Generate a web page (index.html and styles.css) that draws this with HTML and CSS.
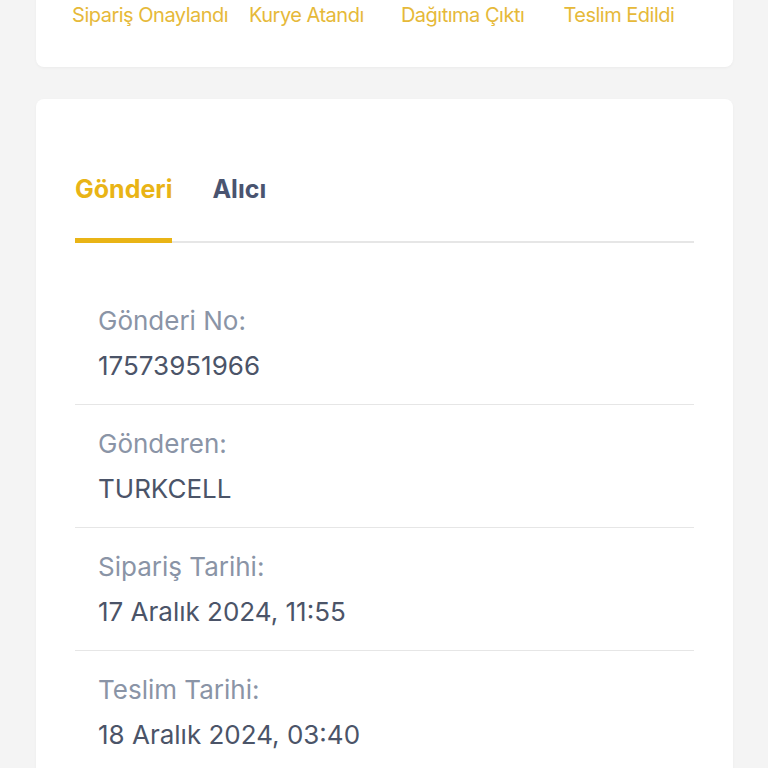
FILE: index.html
```html
<!DOCTYPE html>
<html lang="tr">
<head>
<meta charset="utf-8">
<title>Gönderi Takip</title>
<link rel="stylesheet" href="styles.css">
</head>
<body>
<div class="page">
  <section class="card steps-card">
    <div class="steps">
      <div class="step">Sipariş Onaylandı</div>
      <div class="step">Kurye Atandı</div>
      <div class="step">Dağıtıma Çıktı</div>
      <div class="step">Teslim Edildi</div>
    </div>
  </section>

  <section class="card detail-card">
    <div class="tabs">
      <div class="tab active">Gönderi</div>
      <div class="tab">Alıcı</div>
    </div>
    <ul class="info-list">
      <li class="info-row">
        <div class="info-label">Gönderi No:</div>
        <div class="info-value">17573951966</div>
      </li>
      <li class="info-row">
        <div class="info-label">Gönderen:</div>
        <div class="info-value">TURKCELL</div>
      </li>
      <li class="info-row">
        <div class="info-label">Sipariş Tarihi:</div>
        <div class="info-value">17 Aralık 2024, 11:55</div>
      </li>
      <li class="info-row">
        <div class="info-label">Teslim Tarihi:</div>
        <div class="info-value">18 Aralık 2024, 03:40</div>
      </li>
    </ul>
  </section>
</div>
</body>
</html>
```

FILE: styles.css
```css
* { box-sizing: border-box; }
html, body { margin: 0; padding: 0; }
body {
  background: #f4f4f4;
  font-family: "Inter", "Liberation Sans", sans-serif;
  overflow: hidden;
}
.page {
  padding: 0 35px 0 36px;
  display: flex;
  flex-direction: column;
  gap: 32px;
  margin-top: -40px;
}
.card {
  background: #ffffff;
  border-radius: 8px;
  box-shadow: 0 1px 3px rgba(0,0,0,0.04);
}
.steps-card {
  padding: 40px 39px 37px;
}
.steps {
  display: grid;
  grid-template-columns: repeat(4, 1fr);
  margin: 0 -3px;
}
.step {
  text-align: center;
  color: #e6b939;
  font-size: 20px;
  line-height: 30px;
  letter-spacing: -0.5px;
  white-space: nowrap;
}
.detail-card {
  padding: 75px 39px 40px;
}
.tabs {
  display: flex;
  gap: 40px;
  border-bottom: 2px solid #e6e6e6;
}
.tab {
  font-size: 25px;
  font-weight: 700;
  line-height: 30px;
  color: #4a5470;
  padding-bottom: 34px;
}
.tab.active {
  color: #e9b416;
  border-bottom: 5px solid #e9b416;
  margin-bottom: -2px;
}
.info-list {
  list-style: none;
  margin: 39px 0 0;
  padding: 0;
}
.info-row {
  padding: 16px 23px;
  border-bottom: 1px solid #e6e6e6;
}
.info-label {
  font-size: 26px;
  line-height: 45px;
  color: #8a94a6;
}
.info-value {
  font-size: 26px;
  line-height: 45px;
  color: #4b5468;
}
```
